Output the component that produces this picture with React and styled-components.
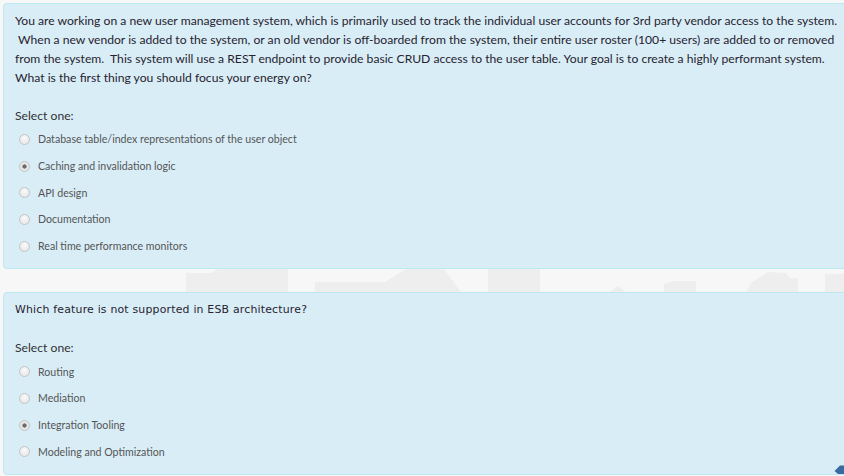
import styled, { createGlobalStyle } from "styled-components";

const questions = [
  {
    id: 1,
    lines: [
      "You are working on a new user management system, which is primarily used to track the individual user accounts for 3rd party vendor access to the system.",
      "\u00a0When a new vendor is added to the system, or an old vendor is off-boarded from the system, their entire user roster (100+ users) are added to or removed",
      "from the system.\u00a0 This system will use a REST endpoint to provide basic CRUD access to the user table. Your goal is to create a highly performant system.",
      "What is the first thing you should focus your energy on?",
    ],
    mono: false,
    options: [
      "Database table/index representations of the user object",
      "Caching and invalidation logic",
      "API design",
      "Documentation",
      "Real time performance monitors",
    ],
    selected: 1,
  },
  {
    id: 2,
    lines: ["Which feature is not supported in ESB architecture?"],
    mono: true,
    options: ["Routing", "Mediation", "Integration Tooling", "Modeling and Optimization"],
    selected: 2,
  },
];

function Skyline() {
  return (
    <SkylineSvg viewBox="0 0 844 40" preserveAspectRatio="none">
      <path
        fill="#eeeeee"
        d="M186 40 V9 H212 L222 2 H288 V40 Z M315 40 V18 H385 L414 0 H440 L470 40 Z M488 40 V0 H540 V40 Z M540 40 H600 V30 L610 28 L618 22 L628 30 H640 V40 Z M664 40 V20 L674 17 H696 V40 Z M726 40 V32 L746 28 L752 18 L768 8 L786 9 L790 14 H798 V40 Z M825 40 V10 H844 V40 Z"
      />
    </SkylineSvg>
  );
}

function Radio({ checked }) {
  return <RadioDot $checked={checked} />;
}

function Question({ q }) {
  return (
    <Card>
      <QText $mono={q.mono}>
        {q.lines.map((l, i) => (
          <Line key={i}>{l}</Line>
        ))}
      </QText>
      <Prompt>Select one:</Prompt>
      <Options>
        {q.options.map((o, i) => (
          <Option key={o}>
            <Radio checked={i === q.selected} />
            <span>{o}</span>
          </Option>
        ))}
      </Options>
    </Card>
  );
}

export default function App() {
  return (
    <>
      <GlobalStyle />
      <Page>
        <Skyline />
        <Question q={questions[0]} />
        <Question q={questions[1]} />
        <ScrollTop viewBox="0 0 20 20">
          <path d="M1 14 L12 3 L20 3 L20 20 L8 20 Z" fill="#3b6aa0" />
        </ScrollTop>
      </Page>
    </>
  );
}

const GlobalStyle = createGlobalStyle`
  html, body {
    margin: 0;
    padding: 0;
    background: #f7f7f7;
    overflow: hidden;
  }
  body {
    font-family: "Lato", sans-serif;
  }
`;

const Page = styled.div`
  position: relative;
  width: 844px;
  height: 476px;
  overflow: hidden;
  padding: 3px 0 0 3px;
  box-sizing: border-box;
  display: flex;
  flex-direction: column;
  gap: 23px;
`;

const SkylineSvg = styled.svg`
  position: absolute;
  left: 0;
  top: 264px;
  width: 844px;
  height: 40px;
`;

const Card = styled.section`
  position: relative;
  width: 870px;
  background: #d9edf7;
  border: 1px solid #bce8f1;
  border-radius: 4px;
  padding: 7px 11px 9px 11px;
  box-sizing: border-box;
`;

const QText = styled.div`
  font-family: ${(p) => (p.$mono ? `"DejaVu Sans", Verdana, sans-serif` : `"Lato", sans-serif`)};
  font-size: ${(p) => (p.$mono ? "10.9px" : "12.15px")};
  line-height: 19px;
  color: #26232e;
  letter-spacing: ${(p) => (p.$mono ? "0.2px" : "0")};
  margin-bottom: 19px;
`;

const Line = styled.div`
  white-space: nowrap;
`;

const Prompt = styled.div`
  font-family: "Lato", sans-serif;
  font-size: 12.15px;
  line-height: 19px;
  color: #333;
  margin-bottom: 1px;
`;

const Options = styled.div`
  display: flex;
  flex-direction: column;
`;

const Option = styled.label`
  display: flex;
  align-items: center;
  gap: 8px;
  height: 26.7px;
  padding-left: 4px;
  font-family: "Lato", sans-serif;
  font-size: 10.6px;
  color: #555;
`;

const RadioDot = styled.span`
  width: 9px;
  height: 9px;
  border-radius: 50%;
  border: 1px solid #c4c4c4;
  background: ${(p) =>
    p.$checked
      ? "radial-gradient(circle, #6a6a6a 0 1.8px, #e6e6e6 2.4px)"
      : "radial-gradient(circle at 50% 35%, #fafafa, #e2e2e2)"};
  flex: none;
`;

const ScrollTop = styled.svg`
  position: absolute;
  right: 0;
  bottom: 0;
  width: 10px;
  height: 14px;
`;
